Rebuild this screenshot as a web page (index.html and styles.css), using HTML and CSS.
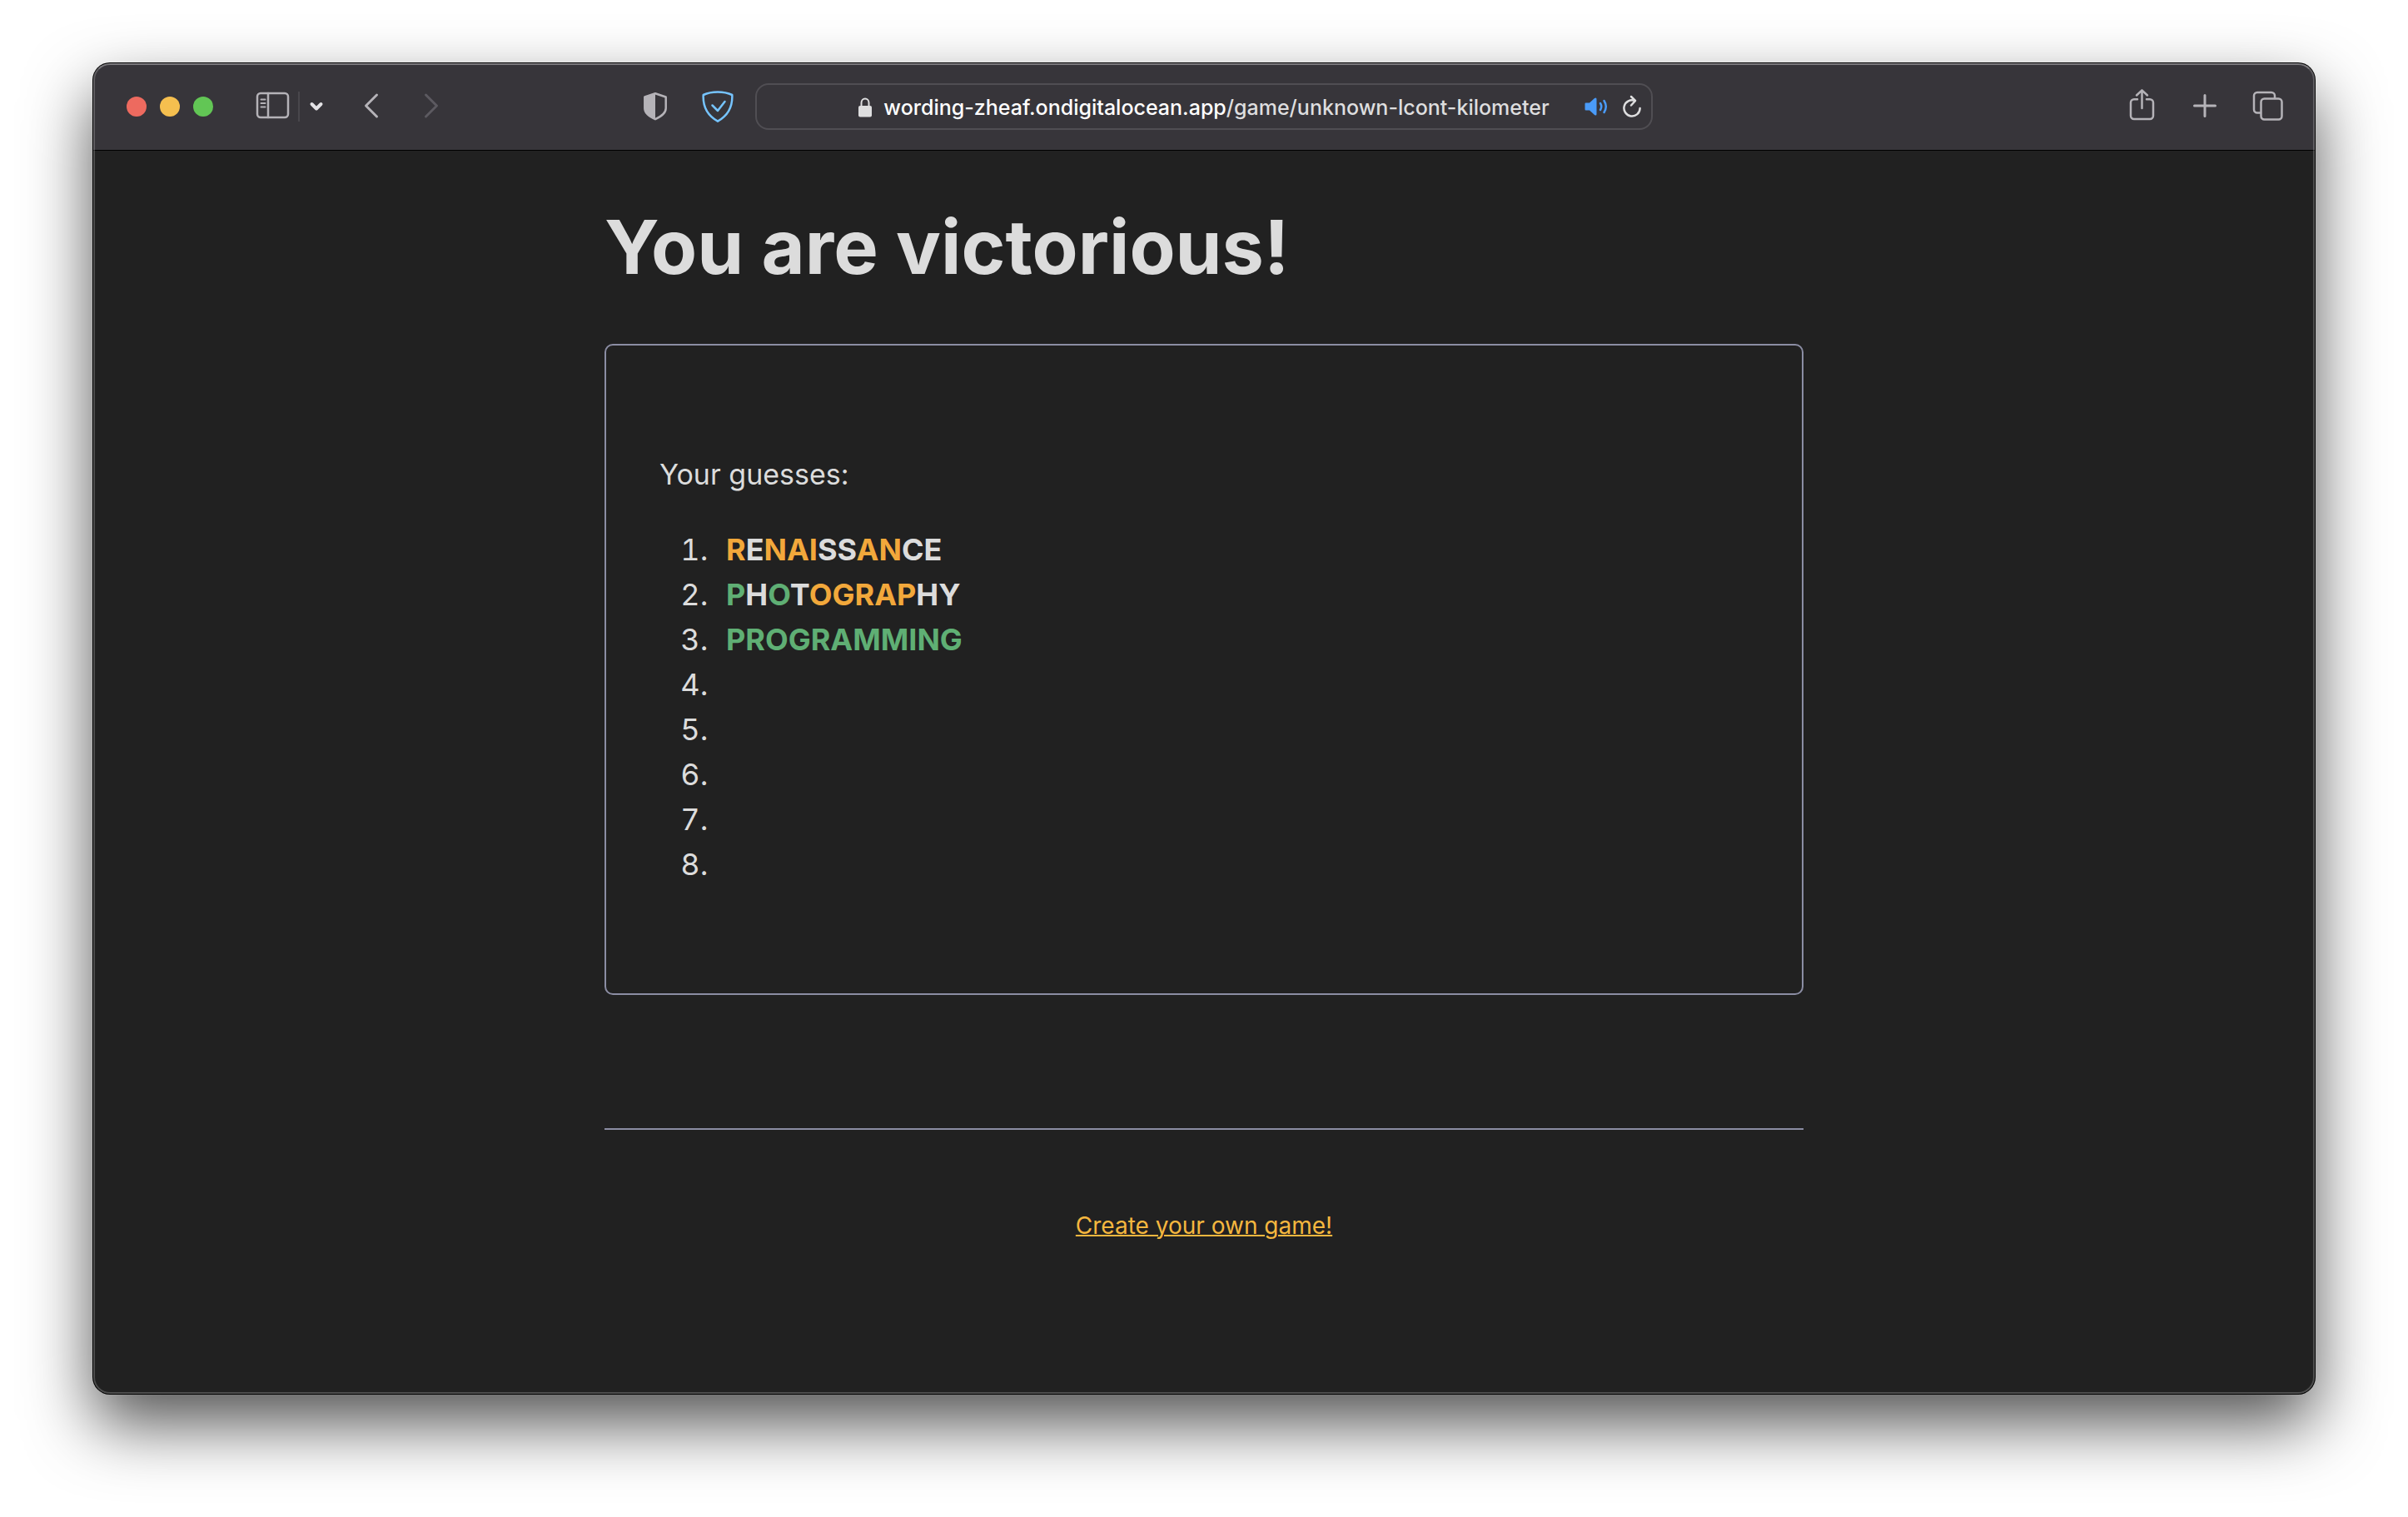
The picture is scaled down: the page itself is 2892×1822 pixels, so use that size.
FILE: index.html
```html
<!DOCTYPE html>
<html lang="en">
<head>
<meta charset="utf-8">
<meta name="viewport" content="width=device-width, initial-scale=1">
<title>You are victorious!</title>
<link rel="stylesheet" href="styles.css">
</head>
<body>
<div class="window">
  <header class="toolbar">
    <div class="toolbar-left">
      <div class="lights">
        <button class="light light-close" aria-label="Close"></button>
        <button class="light light-minimize" aria-label="Minimize"></button>
        <button class="light light-zoom" aria-label="Zoom"></button>
      </div>
      <div class="sidebar-group">
        <button class="tool" aria-label="Show sidebar">
          <svg width="44" height="44" viewBox="0 0 44 44"><rect x="3" y="6" width="37" height="29" rx="4"/><path d="M16 6v29"/><path class="thin" d="M7.500 13.500h5M7.500 18h5M7.500 22.500h5"/></svg>
        </button>
        <span class="separator"></span>
        <button class="tool bright" aria-label="Tab groups">
          <svg width="24" height="44" viewBox="0 0 24 44"><path class="heavy" d="M6.500 19l5.500 5.500L17.500 19"/></svg>
        </button>
      </div>
      <nav class="history" aria-label="History">
        <button class="tool" aria-label="Back">
          <svg width="24" height="44" viewBox="0 0 24 44"><path class="medium" d="M18.500 8L5.500 21l13 13"/></svg>
        </button>
        <button class="tool dim" aria-label="Forward" disabled>
          <svg width="24" height="44" viewBox="0 0 24 44"><path class="medium" d="M5.500 8l13 13-13 13"/></svg>
        </button>
      </nav>
      <div class="shields">
        <button class="tool" aria-label="Privacy report">
          <svg width="28" height="44" viewBox="0 0 28 44"><path d="M14 6.200L26.700 10.500V24c0 6-5 9.500-12.700 13.200C6.300 33.500 1.300 30 1.300 24V10.500z"/><path class="solid" d="M14 6L1.500 10.500V24c0 6 5 9.500 12.500 13z"/></svg>
        </button>
        <button class="tool blue" aria-label="Ad blocker">
          <svg width="38" height="44" viewBox="0 0 38 44"><path d="M19 4.500c6 0 12 1 17.300 3.500C37 22 32 32.500 19 39.700 6 32.500 1 22 1.700 8 7 5.500 13 4.500 19 4.500z"/><path d="M12.500 20.500l6.500 6.500L27.500 16"/></svg>
        </button>
      </div>
    </div>
    <div class="address">
      <button class="url" aria-label="Address">
        <svg class="lock" width="16" height="24" viewBox="0 0 16 24"><path class="lock-bow" d="M3.500 11V6.500a4.500 5 0 0 1 9 0V11"/><rect class="lock-body" y="10" width="16" height="13.500" rx="2"/></svg>
        <span class="url-text">wording-zheaf.ondigitalocean.app<span class="url-path">/game/unknown-lcont-kilometer</span></span>
      </button>
      <div class="address-tools">
        <button class="tool audio" aria-label="Mute tab">
          <svg width="28" height="28" viewBox="0 0 28 28"><path class="solid" d="M1.500 9.500h4.500l6-5.500q2.500-1.500 2.500 1v18q0 2.500-2.500 1l-6-5.500h-4.500q-1 0-1-1.200v-6.600q0-1.200 1-1.200z"/><path d="M19 10q2.500 4 0 8M23.500 7q4.500 7 0 14"/></svg>
        </button>
        <button class="tool reload" aria-label="Reload">
          <svg width="22" height="28" viewBox="0 0 22 28"><path d="M14.500 7A9.600 9.600 0 1 0 20.600 16"/><path d="M10 2l5 5-5 5.500"/></svg>
        </button>
      </div>
    </div>
    <div class="toolbar-right">
      <button class="tool" aria-label="Share">
        <svg width="44" height="44" viewBox="0 0 44 44"><path d="M17 13.200h-4a4 4 0 0 0-4 4V33a4 4 0 0 0 4 4h19a4 4 0 0 0 4-4V17.200a4 4 0 0 0-4-4h-4M22.500 24V3M16 8.500L22.500 2.300 29 8.500"/></svg>
      </button>
      <button class="tool" aria-label="New tab">
        <svg width="44" height="44" viewBox="0 0 44 44"><path class="medium" d="M22 8.500v25M9.500 21h25"/></svg>
      </button>
      <button class="tool" aria-label="Show all tabs">
        <svg width="44" height="44" viewBox="0 0 44 44"><rect x="13.500" y="12.500" width="25" height="25" rx="4"/><path d="M13 29.500H9a4 4 0 0 1-4-4V9a4 4 0 0 1 4-4h17a4 4 0 0 1 4 4v3"/></svg>
      </button>
    </div>
  </header>

  <main class="page">
    <h1 class="title">You are victorious!</h1>
    <section class="board">
      <p class="board-label">Your guesses:</p>
      <ol class="guesses">
        <li><strong><span class="near">R</span>E<span class="near">NAI</span>SS<span class="near">AN</span>CE</strong></li>
        <li><strong><span class="hit">P</span>H<span class="hit">O</span>T<span class="near">OGRAP</span>HY</strong></li>
        <li><strong><span class="hit">PROGRAMMING</span></strong></li>
        <li></li>
        <li></li>
        <li></li>
        <li></li>
        <li></li>
      </ol>
    </section>
    <hr class="rule">
    <p class="footer"><a class="create" href="#new">Create your own game!</a></p>
  </main>
</div>
</body>
</html>
```
FILE: styles.css
```css
* {
  box-sizing: border-box;
}

body {
  margin: 0;
  padding: 76px 112px 148px;
  background: #fff;
  color: #dcdcdc;
  font-family: Inter, "Liberation Sans", sans-serif;
}

button {
  padding: 0;
  border: 0;
  background: none;
  color: inherit;
  font: inherit;
}

svg {
  display: block;
}

/* Window frame */

.window {
  position: relative;
  min-height: calc(100vh - 224px);
  overflow: hidden;
  border-radius: 20px;
  background: #212121;
  box-shadow: 0 0 0 1px #000, 0 36px 80px rgba(0, 0, 0, 0.68);
}

.window::after {
  content: "";
  position: absolute;
  inset: 0;
  border: 2px solid rgba(255, 255, 255, 0.2);
  border-top-color: rgba(255, 255, 255, 0.34);
  border-radius: 20px;
  pointer-events: none;
}

/* Toolbar */

.toolbar {
  display: grid;
  grid-template-columns: 1fr minmax(0, 1078px) 1fr;
  align-items: center;
  height: 105px;
  border-bottom: 1px solid #000;
  background: #37353a;
}

.toolbar-left,
.toolbar-right,
.lights,
.sidebar-group,
.history,
.shields,
.address-tools {
  display: flex;
  align-items: center;
}

.toolbar-left {
  padding: 0 26px 0 40px;
}

.toolbar-right {
  justify-content: flex-end;
  gap: 32px;
  padding-right: 34px;
}

.lights {
  gap: 16px;
}

.light {
  width: 24px;
  height: 24px;
  border-radius: 50%;
}

.light-close {
  background: #ed6a5f;
}

.light-minimize {
  background: #f5bf4f;
}

.light-zoom {
  background: #62c655;
}

.sidebar-group {
  gap: 8px;
  margin-left: 50px;
}

.separator {
  width: 2px;
  height: 36px;
  background: #49474c;
}

.history {
  gap: 48px;
  margin-left: 42px;
}

.shields {
  gap: 42px;
  margin-left: auto;
}

.tool {
  color: #b5b3b8;
}

.tool svg {
  fill: none;
  stroke: currentColor;
  stroke-width: 2.5;
  stroke-linecap: round;
  stroke-linejoin: round;
}

.tool .thin {
  stroke-width: 2;
}

.tool .medium {
  stroke-width: 3;
}

.tool .heavy {
  stroke-width: 4;
}

.tool .solid {
  fill: currentColor;
  stroke: none;
}

.bright {
  color: #e4e3e6;
}

.dim {
  color: #5c5a60;
}

.blue {
  color: #76c4ff;
}

/* Address field */

.address {
  display: grid;
  grid-template-columns: 1fr auto 1fr;
  align-items: center;
  height: 56px;
  padding: 0 12px;
  border: 2px solid #504e53;
  border-radius: 16px;
}

.url {
  display: flex;
  grid-column: 2;
  align-items: center;
  gap: 14px;
  padding-top: 2px;
  color: #fff;
  font-size: 25px;
  font-weight: 500;
  line-height: 32px;
  white-space: nowrap;
}

.url-path {
  color: #dededf;
}

.lock-bow {
  fill: none;
  stroke: #dededf;
  stroke-width: 2;
}

.lock-body {
  fill: #dededf;
}

.address-tools {
  justify-content: flex-end;
  gap: 18px;
}

.audio {
  color: #4a9bf8;
}

.reload {
  color: #dededf;
}

/* Game page */

.page {
  max-width: 1440px;
  margin: 0 auto;
  padding: 58px 0;
}

.title {
  margin: 0 0 58px;
  font-size: 90px;
  font-weight: 700;
  line-height: 116px;
}

.board {
  padding: 128px 64px;
  border: 2px solid #8b8da3;
  border-radius: 10px;
  font-size: 36px;
  line-height: 54px;
}

.board-label {
  margin: 0 0 36px;
  font-size: 34px;
}

.guesses {
  margin: 0;
  padding-left: 68px;
}

.guesses li {
  padding-left: 12px;
}

.near {
  color: #f2a83b;
}

.hit {
  color: #5faf74;
}

.rule {
  margin: 160px 0 94px;
  border: 0;
  border-top: 2px solid #8b8da3;
}

.footer {
  margin: 0;
  font-size: 28px;
  line-height: 42px;
  text-align: center;
}

.create {
  color: #f5b73f;
  text-decoration-thickness: 2px;
}
```
